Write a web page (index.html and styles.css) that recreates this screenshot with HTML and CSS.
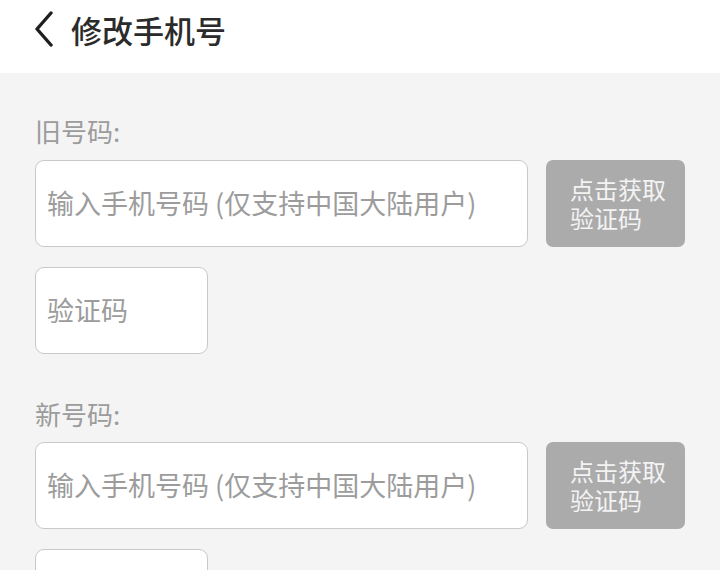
FILE: index.html
```html
<!DOCTYPE html>
<html>
<head>
    <meta charset="utf-8">
    <title>修改手机号</title>
    <link rel="stylesheet" href="styles.css">
</head>
<body>
    <header class="topbar">
        <button class="back" aria-label="返回">
            <svg width="20" height="36" viewBox="0 0 20 36">
                <path d="M17 2 L3 18 L17 34" fill="none" stroke="#1e1e1e" stroke-width="3.4" stroke-linecap="round" stroke-linejoin="round"/>
            </svg>
        </button>
        <h1 class="title">修改手机号</h1>
    </header>

    <main class="form">
        <section class="group">
            <div class="label">旧号码:</div>
            <div class="row">
                <input class="field phone" type="tel" placeholder="输入手机号码 (仅支持中国大陆用户)">
                <button class="send"><span>点击获取</span><span>验证码</span></button>
            </div>
            <input class="field code" type="text" placeholder="验证码">
        </section>

        <section class="group">
            <div class="label">新号码:</div>
            <div class="row">
                <input class="field phone" type="tel" placeholder="输入手机号码 (仅支持中国大陆用户)">
                <button class="send"><span>点击获取</span><span>验证码</span></button>
            </div>
            <input class="field code" type="text" placeholder="验证码">
        </section>
    </main>
</body>
</html>
```

FILE: styles.css
```css
:root {
    --page-bg: #f4f4f4;
    --line: #c9c9c9;
    --hint: #9c9c9c;
    --btn-bg: #ababab;
}

* {
    box-sizing: border-box;
}

body {
    margin: 0;
    background: var(--page-bg);
    font-family: "Noto Sans CJK SC", "Noto Sans", sans-serif;
    overflow: hidden;
}

.topbar {
    height: 73px;
    background: #fff;
    display: flex;
    align-items: center;
    padding: 0 0 15px 34px;
    gap: 17px;
}

.back {
    display: flex;
    padding: 0;
    margin: 0;
    border: none;
    background: transparent;
}

.title {
    margin: 0;
    font-size: 31px;
    font-weight: 500;
    color: #2b2b2b;
}

.form {
    padding: 0 35px;
}

.group {
    display: flex;
    flex-direction: column;
    align-items: flex-start;
}

.label {
    font-size: 26px;
    line-height: 30px;
    color: var(--hint);
    margin-top: 43px;
    margin-bottom: 14px;
}

.group + .group .label {
    margin-top: 45px;
    margin-bottom: 13px;
}

.row {
    display: flex;
    gap: 18px;
}

.field {
    height: 87px;
    background: #fff;
    border: 1.5px solid var(--line);
    border-radius: 9px;
    padding: 0 0 2px 11px;
    font-family: inherit;
    font-size: 27px;
    color: #333;
    outline: none;
}

.field::placeholder {
    color: var(--hint);
}

.phone {
    width: 493px;
}

.code {
    width: 173px;
    margin-top: 20px;
}

/* latin font first keeps the line boxes tight, glyphs come from the CJK font */
.send {
    width: 139px;
    height: 87px;
    border: none;
    border-radius: 7px;
    background: var(--btn-bg);
    color: #f3f3f3;
    font-family: "Liberation Sans", "Noto Sans CJK SC", sans-serif;
    font-size: 24px;
    line-height: 29px;
    text-align: left;
    padding: 2px 0 0 24px;
    display: flex;
    flex-direction: column;
    justify-content: center;
}
```
